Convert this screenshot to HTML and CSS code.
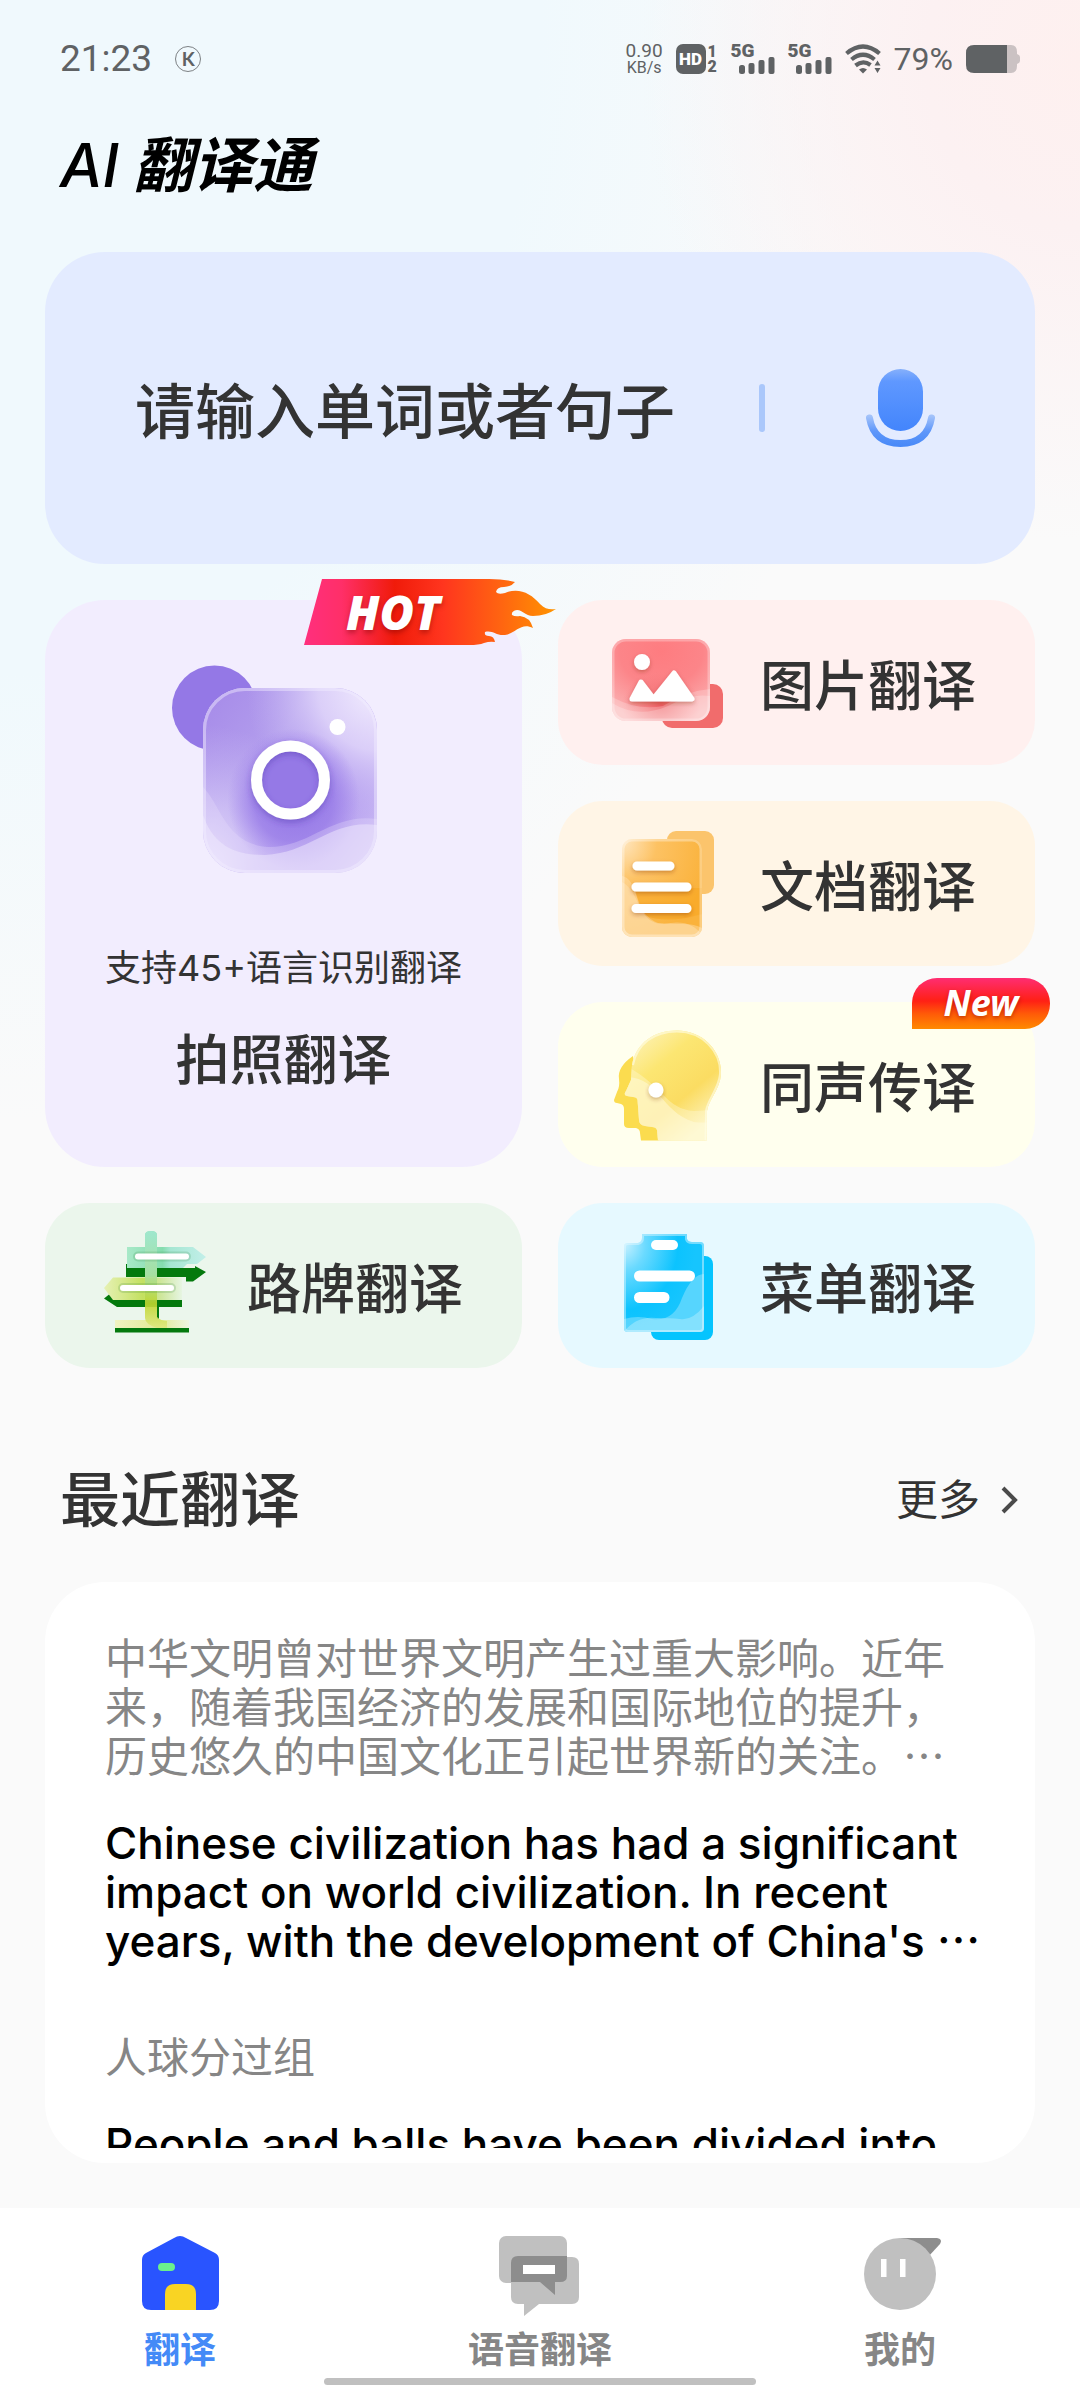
FILE: index.html
```html
<!DOCTYPE html>
<html lang="zh-CN">
<head>
<meta charset="utf-8">
<meta name="viewport" content="width=device-width, initial-scale=1">
<title>AI 翻译通</title>
<link rel="stylesheet" href="styles.css">
</head>
<body>
<div class="app">
  <div class="status">
    <span class="status-time">21:23</span>
    <span class="status-app">K</span>
    <span class="status-speed"><span>0.90</span><span class="unit">KB/s</span></span>
    <span class="status-hd"><span class="hd-box">HD</span><span class="hd-nums"><span>1</span><span>2</span></span></span>
    <span class="status-sim"><span class="sim-label">5G</span>
      <svg class="bars" viewBox="0 0 36 17" fill="currentColor" aria-hidden="true"><rect x="0" y="8" width="6" height="9" rx="2.5"/><rect x="9.500" y="6" width="6" height="11" rx="2"/><rect x="19.500" y="3" width="6" height="14" rx="2"/><rect x="29.500" y="0" width="6" height="17" rx="2"/></svg></span>
    <span class="status-sim"><span class="sim-label">5G</span>
      <svg class="bars" viewBox="0 0 36 17" fill="currentColor" aria-hidden="true"><rect x="0" y="8" width="6" height="9" rx="2.5"/><rect x="9.500" y="6" width="6" height="11" rx="2"/><rect x="19.500" y="3" width="6" height="14" rx="2"/><rect x="29.500" y="0" width="6" height="17" rx="2"/></svg></span>
    <svg class="wifi" viewBox="0 0 36 30" aria-hidden="true">
      <g fill="none" stroke="currentColor" stroke-width="4.200"><path d="M1.500 9.500Q18-4.500 34.500 9.500"/><path d="M6.500 15.500Q18 6 29.500 15.500"/><path d="M10.500 21.500Q18 15.500 25.500 21"/></g>
      <path d="M14 25.500q4-3 8 0L18 29.500zM29.500 21.500l3-5 3 5zM29.500 24l3 5 3-5z" fill="currentColor"/>
    </svg>
    <span class="status-percent">79%</span>
    <svg class="battery" viewBox="0 0 54 28" aria-hidden="true">
      <path d="M40 0h5q6 0 6 7v2q3 1 3 3v4q0 2-3 3v2q0 7-6 7h-5z" fill="#cbc2c3"/>
      <path d="M41 0v28H8q-8 0-8-8V8q0-8 8-8z" fill="currentColor"/>
    </svg>
  </div>

  <header class="header"><h1><span class="latin">AI</span> 翻译通</h1></header>

  <main class="content">
    <div class="search">
      <input class="search-input" type="text" placeholder="请输入单词或者句子" aria-label="请输入单词或者句子">
      <span class="search-divider"></span>
      <button class="mic" type="button" aria-label="语音输入">
        <svg viewBox="0 0 70 80" aria-hidden="true">
          <defs>
            <linearGradient id="micG" x1="0" y1="0" x2="0" y2="1"><stop offset="0" stop-color="#86b0fb"/><stop offset=".2" stop-color="#5f98ff"/><stop offset="1" stop-color="#4385fc"/></linearGradient>
            <linearGradient id="micA" x1="0" y1="48" x2="0" y2="78" gradientUnits="userSpaceOnUse"><stop offset="0" stop-color="#a3c2fa"/><stop offset=".5" stop-color="#5f97fa"/><stop offset="1" stop-color="#4889f8"/></linearGradient>
          </defs>
          <rect x="13" y="1" width="45" height="62" rx="22.500" fill="url(#micG)"/>
          <path d="M4.500 50Q9 75.500 35.500 75.500T66.500 50" fill="none" stroke="url(#micA)" stroke-width="7" stroke-linecap="round"/>
        </svg>
      </button>
    </div>

    <div class="grid">
      <button class="card card-photo" type="button">
        <span class="badge-hot">
          <svg viewBox="0 0 252 66" aria-hidden="true">
            <defs><linearGradient id="hotG"><stop offset="0" stop-color="#ff2f7e"/><stop offset=".15" stop-color="#ff2f68"/><stop offset=".36" stop-color="#f01b0a"/><stop offset=".55" stop-color="#ff351e"/><stop offset=".78" stop-color="#ff6411"/><stop offset="1" stop-color="#ff9400"/></linearGradient></defs>
            <path fill="url(#hotG)" d="M18 0H185Q200 0 211 3Q207 8 200 8Q193 8 192 13Q194 16 201 14C214 8 227 14 236 25C241 30 246 31 252 30Q242 37 229 37C221 37 219 31 213 31Q207 32 208 36Q211 38 216 37Q226 38 229 49C217 43 212 54 201 56C192 57 189 51 181 53Q180 57 185 57Q190 57 191 63Q186 62 180 64Q175 66 165 66H0z"/>
          </svg>
          <span>HOT</span>
        </span>
        <svg class="photo-icon" viewBox="0 0 226 210" aria-hidden="true">
          <defs>
            <linearGradient id="camG" x1="0" y1=".1" x2="1" y2=".9"><stop offset="0" stop-color="#a78ce9"/><stop offset=".35" stop-color="#b39eed"/><stop offset=".6" stop-color="#a286eb"/><stop offset="1" stop-color="#cfc0f5"/></linearGradient>
            <radialGradient id="camL" cx="1" cy="0" r=".75"><stop offset="0" stop-color="#f3eefe"/><stop offset=".45" stop-color="#e0d5fa" stop-opacity=".9"/><stop offset="1" stop-color="#c4b4f2" stop-opacity="0"/></radialGradient>
            <radialGradient id="camD" cx=".52" cy=".6" r=".38"><stop offset="0" stop-color="#9275e6"/><stop offset=".6" stop-color="#9a7ee8" stop-opacity=".8"/><stop offset="1" stop-color="#a286eb" stop-opacity="0"/></radialGradient>
            <radialGradient id="camB" cx="0" cy="1" r=".8"><stop offset="0" stop-color="#eee8fd"/><stop offset="1" stop-color="#d0c2f5" stop-opacity="0"/></radialGradient>
            <clipPath id="camC"><rect x="32" y="23" width="174" height="185" rx="42"/></clipPath>
            <filter id="soft" x="-20%" y="-20%" width="140%" height="140%"><feDropShadow dx="0" dy="3" stdDeviation="3" flood-color="#4b2fa8" flood-opacity=".4"/></filter>
          </defs>
          <circle cx="43.500" cy="43" r="42.500" fill="#9478e6"/>
          <g clip-path="url(#camC)">
            <rect x="32" y="23" width="174" height="185" fill="#f2edfe"/>
            <rect x="32" y="23" width="174" height="185" fill="url(#camG)"/>
            <rect x="32" y="23" width="174" height="185" fill="url(#camB)"/>
            <rect x="32" y="23" width="174" height="185" fill="url(#camL)"/>
            <rect x="32" y="23" width="174" height="185" fill="url(#camD)"/>
            <path d="M32 122C50 140 55 180 98 182C140 182 160 148 206 154V210H32z" fill="#e7defb" fill-opacity=".3"/>
            <path d="M32 150C42 178 60 190 94 190C140 188 160 154 206 160V210H32z" fill="#f0eafd" fill-opacity=".5"/>
            <rect x="33" y="24" width="172" height="183" rx="41" fill="none" stroke="#f2edfe" stroke-opacity=".45" stroke-width="4"/>
          </g>
          <circle cx="119.500" cy="115" r="29" fill="#9579e6"/>
          <circle cx="119.500" cy="115" r="34" fill="none" stroke="#fff" stroke-width="11" filter="url(#soft)"/>
          <circle cx="166.500" cy="62" r="8" fill="#fff"/>
        </svg>
        <span class="photo-sub">支持45+语言识别翻译</span>
        <span class="card-label">拍照翻译</span>
      </button>

      <button class="card card-image" type="button">
        <svg class="card-icon" viewBox="0 0 120 120" aria-hidden="true">
          <defs>
            <radialGradient id="imgG" cx=".5" cy=".15" r=".85"><stop offset="0" stop-color="#fe7c80"/><stop offset=".5" stop-color="#fc8589"/><stop offset="1" stop-color="#fbb4b5"/></radialGradient>
            <radialGradient id="imgD" cx=".5" cy=".8" r=".4"><stop offset="0" stop-color="#ee5f63"/><stop offset="1" stop-color="#f6797c" stop-opacity="0"/></radialGradient>
            <clipPath id="imgC"><rect x="4" y="16" width="98" height="82" rx="14"/></clipPath>
            <filter id="sh" x="-20%" y="-50%" width="140%" height="220%"><feDropShadow dx="0" dy="2" stdDeviation="2" flood-color="#7d2a10" flood-opacity=".35"/></filter>
          </defs>
          <rect x="54" y="61" width="61" height="44" rx="10" fill="#f16c6c"/>
          <g clip-path="url(#imgC)">
            <rect x="4" y="16" width="98" height="82" fill="url(#imgG)"/>
            <rect x="4" y="16" width="98" height="82" fill="url(#imgD)"/>
            <path d="M4 74Q30 88 55 83Q78 68 102 66V98H4z" fill="#fff" fill-opacity=".22"/>
            <path d="M4 80Q30 96 60 83Q82 70 102 73V98H4z" fill="#fff" fill-opacity=".22"/>
            <rect x="5" y="17" width="96" height="80" rx="13" fill="none" stroke="#fff" stroke-opacity=".28" stroke-width="3"/>
          </g>
          <g fill="#fff" stroke="#fff" stroke-width="5" stroke-linejoin="round" filter="url(#sh)"><circle cx="34" cy="39" r="5.500"/><path d="M24 76L33 59L46 76zM45 76L66 50L84 76z"/></g>
        </svg>
        <span class="card-label">图片翻译</span>
      </button>

      <button class="card card-doc" type="button">
        <svg class="card-icon" viewBox="0 0 120 120" aria-hidden="true">
          <defs>
            <radialGradient id="docG" cx="0" cy="0" r="1.100"><stop offset="0" stop-color="#ffe8c4"/><stop offset=".4" stop-color="#fdc263"/><stop offset="1" stop-color="#fab23b"/></radialGradient>
            <clipPath id="docC"><rect x="14" y="15" width="80" height="98" rx="10"/></clipPath>
          </defs>
          <rect x="59" y="7" width="47" height="63" rx="9" fill="#fbc46c"/>
          <g clip-path="url(#docC)">
            <rect x="14" y="15" width="80" height="98" fill="url(#docG)"/>
            <path d="M27 64H94V90Q60 100 38 92Q30 80 27 64z" fill="#f7a51f" fill-opacity=".55"/>
            <path d="M14 52C34 56 24 100 56 100Q84 94 94 112V113H14z" fill="#ffeccb" fill-opacity=".35"/>
            <path d="M14 58C30 66 28 90 50 99C70 101 84 98 94 104V113H14z" fill="#ffeccb" fill-opacity=".35"/>
            <rect x="15" y="16" width="78" height="96" rx="9" fill="none" stroke="#fff" stroke-opacity=".35" stroke-width="3"/>
          </g>
          <path d="M29 42H62M28 63H79M28 84.500H79" stroke="#fff" stroke-width="9" stroke-linecap="round" filter="url(#sh)"/>
        </svg>
        <span class="card-label">文档翻译</span>
      </button>

      <button class="card card-voice" type="button">
        <span class="badge-new">New</span>
        <svg class="card-icon" viewBox="0 0 120 120" aria-hidden="true">
          <defs>
            <linearGradient id="heG" x1=".1" y1=".1" x2=".7" y2=".9"><stop offset="0" stop-color="#fdf3bd"/><stop offset=".35" stop-color="#fce672"/><stop offset=".7" stop-color="#fbdc62"/><stop offset="1" stop-color="#fdf2b8"/></linearGradient>
            <clipPath id="heC"><path id="heP" d="M24 40C28 18 46 5.500 69 5.500C95 5.500 114 26 113 49C112 64 101 74 99 86L98.500 115.500H50L49 105Q48 102 44 102L37 101Q31 100 31 95L29.500 75Q29 72 25 72L19 71Q15 70 18 66L23 55Z"/></clipPath>
          </defs>
          <path d="M25 31Q9 42 11 54Q12 62 9 67L6 75Q6 78 9 78L13 79Q16 80 16 84V99Q16 103 21 103H28Q32 104 32 108L33 115.500H51V90L30 68z" fill="#fbdc4f"/>
          <g clip-path="url(#heC)">
            <rect x="10" y="0" width="110" height="120" fill="#fdf0a8"/>
            <rect x="10" y="0" width="110" height="120" fill="url(#heG)"/>
            <path d="M20 52C52 54 52 86 86 97Q94 98 105 97V120H10V50z" fill="#fffbe0" fill-opacity=".5"/>
            <path d="M20 42C56 62 58 84 86 86Q96 86 105 84V120H10V40z" fill="#fffbe0" fill-opacity=".35"/>
            <path d="M24 40C28 18 46 5.500 69 5.500C95 5.500 114 26 113 49C112 64 101 74 99 86L98.500 115.500" fill="none" stroke="#fffde6" stroke-opacity=".6" stroke-width="4"/>
          </g>
          <circle cx="48" cy="65" r="7.500" fill="#fff" filter="url(#sh)"/>
        </svg>
        <span class="card-label">同声传译</span>
      </button>

      <button class="card card-sign" type="button">
        <svg class="card-icon" viewBox="0 0 120 120" aria-hidden="true">
          <defs>
            <linearGradient id="sgA"><stop offset="0" stop-color="#a8e9c8"/><stop offset=".45" stop-color="#85dcae"/><stop offset=".55" stop-color="#a5e6d2"/><stop offset="1" stop-color="#c2efe9"/></linearGradient>
            <linearGradient id="sgB"><stop offset="0" stop-color="#e6f1b4"/><stop offset=".5" stop-color="#c3e060"/><stop offset=".75" stop-color="#cfe7a0"/><stop offset="1" stop-color="#e6f5e2"/></linearGradient>
            <linearGradient id="sgF"><stop offset="0" stop-color="#f1f3c2"/><stop offset=".6" stop-color="#e2ea96"/><stop offset="1" stop-color="#eef6e0"/></linearGradient>
            <linearGradient id="sgP" x1="0" y1="0" x2="0" y2="1"><stop offset="0" stop-color="#a0e8d0"/><stop offset=".45" stop-color="#a8dfa0"/><stop offset=".75" stop-color="#bfd62f"/><stop offset="1" stop-color="#dfe77f"/></linearGradient>
          </defs>
          <path d="M31 38V51H91V55.500H98L111 46L100 40V42H62V38zM9 72.500L14 68.500L20 74H87V65V81H22zM62 74H64V93H62zM20 101H93V98H94V106.500H20z" fill="#04790d"/>
          <path d="M50 9Q50 5 56 5T62 9V21H98L111 31L102 38H92L88 42H62V51H50V42H32V21H50z" fill="url(#sgA)"/>
          <path d="M18 51.500H87V74H18L9 62z" fill="url(#sgB)"/>
          <path d="M20 94H94V102H20z" fill="url(#sgF)"/>
          <path d="M50 9Q50 5 56 5T62 9V91Q66 95 72 95V102H62Q50 98 50 92z" fill="url(#sgP)" fill-opacity=".9"/>
          <path d="M43 30.500H91M28 62H76" fill="none" stroke="#2f7d3a" stroke-opacity=".18" stroke-width="10" stroke-linecap="round"/>
          <path d="M43 30.500H91M28 62H76" fill="none" stroke="#fff" stroke-width="6" stroke-linecap="round"/>
        </svg>
        <span class="card-label">路牌翻译</span>
      </button>

      <button class="card card-menu" type="button">
        <svg class="card-icon" viewBox="0 0 120 120" aria-hidden="true">
          <defs>
            <radialGradient id="mnG" cx="0" cy=".1" r=".9"><stop offset="0" stop-color="#c9f1ff"/><stop offset=".3" stop-color="#6bdaff"/><stop offset=".75" stop-color="#0cc3fe"/><stop offset="1" stop-color="#16c5fe"/></radialGradient>
            <clipPath id="mnC"><path d="M34 8H79V13Q80 16 84 16H92Q96 16 96 20V102Q96 106 92 106H20Q16 106 16 102V20Q16 17 20 17H30Q34 16 34 12z"/></clipPath>
          </defs>
          <rect x="43" y="30" width="62" height="84" rx="8" fill="#05c4fe"/>
          <g clip-path="url(#mnC)">
            <rect x="16" y="8" width="80" height="98" fill="url(#mnG)"/>
            <path d="M16 93Q30 89 44 93Q66 96 74 72Q84 48 96 48V106H16z" fill="#a4e8ff" fill-opacity=".45"/>
            <path d="M16 106Q28 90 48 92Q62 92 72 93Q84 95 96 80V106z" fill="#c9f3ff" fill-opacity=".4"/>
            <path d="M34 8H79V13Q80 16 84 16H92Q96 16 96 20V102Q96 106 92 106H20Q16 106 16 102V20Q16 17 20 17H30Q34 16 34 12z" fill="none" stroke="#e6f9ff" stroke-opacity=".45" stroke-width="4"/>
          </g>
          <rect x="43" y="14" width="27" height="10" rx="5" fill="#fff"/>
          <path d="M31.500 50H81.500M31.500 71.500H56" stroke="#fff" stroke-width="11" stroke-linecap="round"/>
        </svg>
        <span class="card-label">菜单翻译</span>
      </button>
    </div>

    <div class="recent-head">
      <h2>最近翻译</h2>
      <a class="more" href="#recent">更多
        <svg viewBox="0 0 18 28" aria-hidden="true"><path d="M3 2L15 14L3 26" fill="none" stroke="#4a4a4a" stroke-width="4"/></svg>
      </a>
    </div>

    <section class="recent" id="recent">
      <div class="recent-list">
        <article class="entry">
          <p class="source">中华文明曾对世界文明产生过重大影响。近年来，随着我国经济的发展和国际地位的提升，历史悠久的中国文化正引起世界新的关注。⋯</p>
          <p class="result">Chinese civilization has had a significant impact on world civilization. In recent years, with the development of China's ⋯</p>
        </article>
        <article class="entry">
          <p class="source">人球分过组</p>
          <p class="result">People and balls have been divided into</p>
        </article>
      </div>
    </section>
  </main>

  <nav class="tabs">
    <a class="tab tab-active" href="#home">
      <svg viewBox="0 0 84 84" aria-hidden="true"><path d="M36 5Q42 1 48 5L77 20Q81 22 81 27V68Q81 77 72 77H13Q4 77 4 68V27Q4 22 8 20z" fill="#2954ff"/><rect x="20" y="30" width="17" height="8" rx="4" fill="#6bf08c"/><path d="M27 77V61Q27 51 37 51H48Q58 51 58 61V77z" fill="#f9d423"/></svg>
      <span>翻译</span>
    </a>
    <a class="tab" href="#voice">
      <svg viewBox="0 0 84 84" aria-hidden="true"><rect x="1" y="3" width="68" height="47" rx="7" fill="#c0c0c0"/><path d="M20 24H74Q81 24 81 31V64Q81 71 74 71H41L26 83V71H20Q13 71 13 64V31Q13 24 20 24z" fill="#c0c0c0"/><path d="M20 23H69V43Q69 49 62 49H57V62L42 49H13V30Q13 23 20 23z" fill="#8d8d8d"/><rect x="25" y="32" width="32" height="9" fill="#fff"/></svg>
      <span>语音翻译</span>
    </a>
    <a class="tab" href="#mine">
      <svg viewBox="0 0 84 84" aria-hidden="true"><path d="M42 5H79Q85 6 82 11L70 24z" fill="#8d8d8d"/><circle cx="42" cy="41" r="36" fill="#c0c0c0"/><path d="M23 26H28.500V44H23zM42 26H47.500V44H42z" fill="#fff"/></svg>
      <span>我的</span>
    </a>
    <span class="home-bar"></span>
  </nav>
</div>
</body>
</html>
```
FILE: styles.css
```css
* {
  box-sizing: border-box;
}

body {
  margin: 0;
  font-family: Inter, "Noto Sans CJK SC", sans-serif;
  color: #333;
  background: #fafafa;
}

h1,
h2,
p {
  margin: 0;
}

a {
  color: inherit;
  text-decoration: none;
}

button {
  border: 0;
  padding: 0;
  background: none;
  color: inherit;
  font-family: inherit;
}

svg {
  display: block;
  flex-shrink: 0;
  overflow: visible;
}

.app {
  display: flex;
  flex-direction: column;
  height: 100vh;
  background:
    radial-gradient(ellipse 440px 480px at 100% 60px, #fef0ef 0, #fcf1f2 35%, rgba(250, 246, 247, 0) 100%),
    radial-gradient(ellipse 900px 1120px at 0 0, #f0f9fd 0, #f0f9fd 60%, rgba(250, 250, 250, 0) 100%),
    #fafafa;
}

/* Status bar */
.status {
  display: flex;
  align-items: center;
  gap: 13px;
  height: 118px;
  padding: 0 60px;
  font-family: Roboto, sans-serif;
  color: #5f6264;
}

.status-time {
  font-size: 37px;
  line-height: 40px;
}

.status-app {
  width: 26px;
  height: 26px;
  margin-left: 10px;
  border: 1px solid #7d8184;
  border-radius: 50%;
  font: 700 19px/24px Lato, sans-serif;
  text-align: center;
}

.status-speed {
  display: flex;
  flex-direction: column;
  align-items: center;
  margin-left: auto;
  font-size: 19px;
  line-height: 17px;
}

.status-speed .unit {
  font-size: 16px;
}

.status-hd {
  display: flex;
  gap: 2px;
  font-weight: 900;
}

.hd-box {
  width: 30px;
  height: 30px;
  border-radius: 7px;
  background: currentColor;
  font-size: 17px;
  line-height: 30px;
  text-align: center;
  -webkit-text-fill-color: #fff;
}

.hd-nums {
  display: flex;
  flex-direction: column;
  width: 10px;
  font-size: 16px;
  line-height: 15px;
}

.status-sim {
  display: flex;
  flex-direction: column;
  width: 44px;
  height: 30px;
}

.sim-label {
  height: 13px;
  font-size: 19px;
  font-weight: 900;
  line-height: 13px;
}

.bars {
  align-self: flex-end;
  width: 36px;
  height: 17px;
}

.wifi {
  width: 36px;
  height: 30px;
}

.status-percent {
  font-size: 32px;
  line-height: 40px;
}

.battery {
  width: 54px;
  height: 28px;
}

/* Header */
.header {
  padding: 0 60px;
}

.header h1 {
  font-size: 60px;
  font-style: italic;
  font-weight: 700;
  line-height: 94px;
  color: #000;
}

.header .latin {
  font-weight: 500;
}

.content {
  display: flex;
  flex: 1;
  flex-direction: column;
  min-height: 0;
  padding: 40px 45px 45px;
}

/* Text entry */
.search {
  display: flex;
  flex-shrink: 0;
  align-items: center;
  height: 312px;
  padding: 0 100px 0 90px;
  border-radius: 60px;
  background: #e3ebff;
}

.search-input {
  flex: 1;
  min-width: 0;
  border: 0;
  padding: 0;
  outline: 0;
  background: none;
  color: #333;
  font-family: "Noto Sans CJK SC", sans-serif;
  font-size: 60px;
  font-weight: 500;
  line-height: 88px;
}

.search-input::placeholder {
  color: #333;
  opacity: 1;
}

.search-divider {
  width: 6px;
  height: 48px;
  margin-right: 100px;
  border-radius: 3px;
  background: #aac7fb;
}

.mic svg {
  width: 70px;
  height: 80px;
}

/* Feature cards */
.grid {
  display: grid;
  grid-template-columns: 1fr 1fr;
  grid-auto-rows: 165px;
  gap: 36px;
  margin-top: 36px;
}

.card {
  position: relative;
  display: flex;
  align-items: center;
  gap: 32px;
  padding-left: 50px;
  border-radius: 45px;
}

.card-icon {
  width: 120px;
  height: 120px;
}

.card-label {
  font-family: "Noto Sans CJK SC", sans-serif;
  font-size: 54px;
  font-weight: 500;
  line-height: 64px;
}

.card-photo {
  grid-row: span 3;
  flex-direction: column;
  gap: 0;
  padding: 65px 0 0;
  border-radius: 60px;
  background: #f2edfe;
}

.photo-icon {
  width: 226px;
  height: 210px;
}

.photo-sub {
  margin: 71px 0 35px;
  font-size: 36px;
  line-height: 44px;
}

.card-image { background: #fff0ef; }
.card-doc { background: #fff5e6; }
.card-voice { background: #ffffee; }
.card-sign { background: #ebf6ec; }
.card-menu { background: #e6f9ff; }

.badge-hot {
  position: absolute;
  top: -21px;
  right: -34px;
  z-index: 1;
  width: 252px;
  height: 66px;
  padding-left: 42px;
  color: #fff;
  font: italic 800 47px/66px "Open Sans", sans-serif;
  text-align: left;
  text-shadow: 0 3px 5px rgba(110, 0, 0, 0.4);
}

.badge-hot svg {
  position: absolute;
  inset: 0;
}

.badge-hot span {
  position: relative;
}

.badge-new {
  position: absolute;
  top: -24px;
  right: -15px;
  width: 138px;
  height: 51px;
  border-radius: 25px 25px 25px 0;
  background: linear-gradient(#ff2d72, #ff2015 45%, #ff5a08 70%, #ff8a00);
  color: #fff;
  font: italic 700 36px/50px "Noto Sans", sans-serif;
  text-align: center;
  text-shadow: 0 2px 4px rgba(110, 0, 0, 0.4);
}

/* Recent translations */
.recent-head {
  display: flex;
  align-items: center;
  justify-content: space-between;
  margin: 84px 17px 34px 15px;
}

.recent-head h2 {
  font-size: 60px;
  font-weight: 500;
  line-height: 96px;
}

.more {
  display: flex;
  align-items: center;
  gap: 20px;
  font-size: 42px;
  line-height: 48px;
}

.more svg {
  width: 18px;
  height: 28px;
}

.recent {
  display: flex;
  flex: 1;
  min-height: 0;
  padding: 52px 50px 15px 60px;
  border-radius: 60px;
  background: #fff;
}

.recent-list {
  flex: 1;
  overflow: hidden;
}

.entry {
  display: flex;
  flex-direction: column;
  gap: 38px;
  margin-bottom: 67px;
  line-height: 49px;
}

.source {
  color: #868686;
  font-size: 42px;
}

.result {
  color: #000;
  font-size: 44px;
  font-weight: 500;
}

/* Bottom tabs */
.tabs {
  position: relative;
  display: grid;
  grid-template-columns: repeat(3, 1fr);
  flex-shrink: 0;
  height: 180px;
  padding-top: 25px;
  background: #fff;
}

.tab {
  display: flex;
  flex-direction: column;
  align-items: center;
  gap: 11px;
  color: #868686;
  font-size: 36px;
  font-weight: 600;
  line-height: 44px;
}

.tab svg {
  width: 84px;
  height: 84px;
}

.tab-active {
  color: #448af7;
}

.home-bar {
  position: absolute;
  bottom: 3px;
  left: 30%;
  width: 40%;
  height: 7px;
  border-radius: 4px;
  background: #c0c0c0;
}
```
